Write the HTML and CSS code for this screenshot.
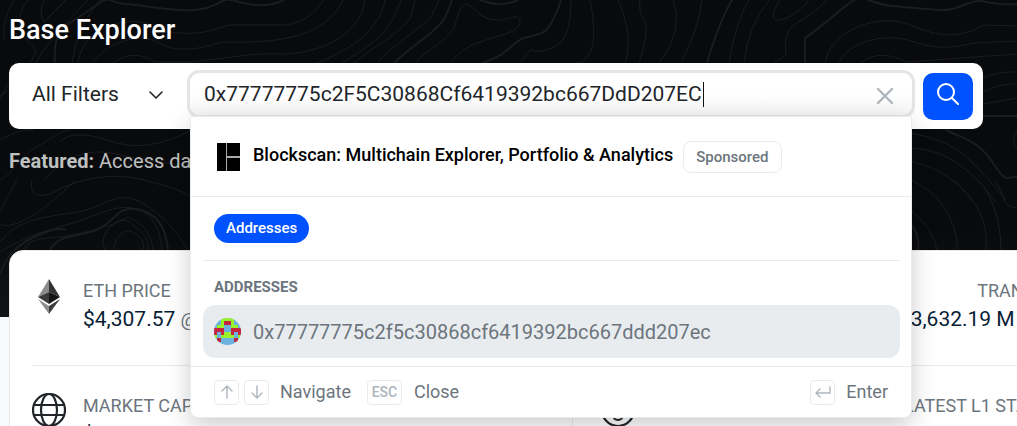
FILE: index.html
```html
<!DOCTYPE html>
<html lang="en">
<head>
<meta charset="utf-8">
<title>Base Explorer</title>
<link rel="stylesheet" href="styles.css">
</head>
<body>
<header class="hero">
  <svg class="contours" viewBox="0 0 1017 317" preserveAspectRatio="xMinYMin slice" aria-hidden="true">
    <g class="thin">
      <path d="M28 0Q18 12 20 25T36 50Q34 62 20 72T0 100"/>
      <path d="M44 0Q38 14 44 22Q54 12 66 0M14 0Q2 18 4 40"/>
      <path d="M88 0Q62 26 42 52Q30 78 0 96M100 0Q76 28 72 64"/>
      <path d="M0 140Q20 128 34 130M60 142Q72 128 110 141T191 130"/>
      <path d="M78 64C80 40 100 26 125 22S160 34 180 33C210 35 218 26 232 25H278C300 26 318 12 323 0"/>
      <path d="M92 64C104 46 122 40 138 38S165 50 180 49C205 50 215 42 226 42C270 43 325 40 343 0"/>
      <path d="M112 64C124 54 140 52 155 62L191 62C230 58 250 53 280 54S360 40 365 0"/>
      <path d="M317 63C350 50 380 30 385 0M342 63C370 45 390 35 401 0M354 63C380 42 405 30 411 16L415 0M377 63C392 45 425 26 432 15L439 0M417 63C415 56 450 42 455 25S464 -2 473 8S490 20 499 20S520 12 520 22S500 35 480 42S460 54 450 63"/>
      <path d="M571 0Q571 38 556 46T531 50Q524 56 520 63M590 0Q602 60 576 63M618 0Q634 38 625 63M640 0Q638 10 644 20T639 63M673 0Q684 30 659 63M702 0Q698 30 681 63M749 0Q736 20 729 63M769 0Q748 26 744 63M780 0Q766 22 780 20T809 0M826 0Q814 14 798 22T786 55L774 63"/>
      <path d="M825 63C830 30 880 12 910 25S960 38 984 25L1017 26M839 63C846 47 870 36 895 38S928 54 974 43L1017 41M860 63Q880 48 906 62L1017 54"/>
      <path d="M983 78Q1000 71 1017 72M983 92Q1000 83 1017 84M983 104L1017 98"/>
      <path d="M1017 130Q1010 141 1017 149M911 133Q950 140 970 160T1006 200M911 148Q960 150 996 203M911 161Q950 170 972 200"/>
      <path d="M911 180Q954 200 958 250M953 180Q990 210 986 250M978 180Q1000 204 1001 250M995 180L1002 194Q1006 210 1017 207M911 211Q933 227 937 250"/>
      <path d="M0 180C14 174 16 158 38 146S55 134 68 130"/>
      <path d="M32 180Q28 200 50 194Q98 168 144 180T191 198"/>
      <path d="M76 180C54 200 32 221 10 225S2 207 17 180"/>
      <path d="M44 180Q74 144 117 154T191 165"/>
      <path d="M0 242C16 220 44 217 72 213S110 196 128 198S174 224 187 250"/>
      <path d="M0 252C34 231 60 228 82 220S118 204 136 209S160 230 162 250"/>
      <path d="M24 250Q28 239 48 238T94 230T128 217Q152 227 153 250M105 250Q99 238 111 226T133 225Q150 236 148 250M115 250Q112 244 120 235T138 236Q147 244 142 250"/>
    </g>
    <g class="thick">
      <path d="M55 64Q53 40 62 28C75 20 84 14 98 4S110 4 125 4S170 12 195 10S220 -3 232 0S262 10 284 0"/>
      <path d="M394 63C410 46 442 30 447 13L452 0M480 0Q500 8 518 0"/>
      <path d="M482 63C510 54 512 42 524 38S544 36 550 25S558 12 561 0"/>
      <path d="M732 0Q719 22 707 63M805 63V38C820 28 832 17 848 4S868 4 892 6S932 10 945 10S970 0 980 1S1000 6 1017 4"/>
      <path d="M946 130C960 137 978 140 993 163S1006 176 1017 177M983 116H1017"/>
      <path d="M50 250C58 234 76 238 96 230S116 206 136 209S166 226 168 250M911 224Q920 235 918 250"/>
      <path d="M0 274Q8 250 32 238T66 230"/>
    </g>
  </svg>
  <div class="hero-body">
    <h1 class="title">Base Explorer</h1>
    <form class="search">
      <label class="filters">
        <select class="filter-select" aria-label="Filter"><option>All Filters</option></select>
        <svg class="chevron" viewBox="0 0 14 14" aria-hidden="true"><path d="M1 5l6 6 6-6"/></svg>
      </label>
      <div class="field">
        <input class="query" type="text" aria-label="Search" value="0x77777775c2F5C30868Cf6419392bc667DdD207EC">
        <span class="caret"></span>
        <button class="clear" type="button" aria-label="Clear"><svg viewBox="0 0 18 18"><path d="M2 2l14 14M16 2L2 16"/></svg></button>
        <section class="results">
          <a class="sponsor" href="#blockscan">
            <svg class="blockscan" viewBox="0 0 23 28" aria-hidden="true"><path fill="#aaa" d="M9 0h1v28H9zM10 13h13v2H10z"/><path d="M0 0h9v28H0zM10 0h13v13H10zM10 15h13v13H10z"/></svg>
            <span class="sponsor-name">Blockscan: Multichain Explorer, Portfolio &amp; Analytics</span>
            <span class="badge">Sponsored</span>
          </a>
          <div class="tabs"><button class="pill" type="button">Addresses</button></div>
          <div class="group">
            <h2 class="group-title">ADDRESSES</h2>
            <a class="result" href="#address">
              <svg class="avatar" viewBox="0 0 8 8" shape-rendering="crispEdges" aria-hidden="true">
                <path fill="#6bb2df" d="M0 0h8v8H0z"/>
                <path fill="#97f22b" d="M2 0h4v2H2zM1 2h2v1H1zM5 2h2v1H5zM3 4h2v1h1v1H2V5h1zM0 5h1v1H0zM7 5h1v1H7z"/>
                <path fill="#c42440" d="M3 1h2v1H3zM0 3h3v1H1v1H0zM5 3h3v2H7V4H5zM1 6h1v1H1zM6 6h1v1H6zM2 4h1v1H2zM5 4h1v1H5z"/>
              </svg>
              <span>0x77777775c2f5c30868cf6419392bc667ddd207ec</span>
            </a>
          </div>
          <footer class="hints">
            <kbd class="key"><svg viewBox="0 0 16 16"><path d="M8 14V2M3 7l5-5 5 5"/></svg></kbd>
            <kbd class="key"><svg viewBox="0 0 16 16"><path d="M8 2v12M3 9l5 5 5-5"/></svg></kbd>
            <span class="hint">Navigate</span>
            <kbd class="key esc">ESC</kbd>
            <span class="hint">Close</span>
            <kbd class="key enter"><svg viewBox="0 0 16 16"><path d="M15 3v6H1M5 5L1 9l4 4"/></svg></kbd>
            <span class="hint last">Enter</span>
          </footer>
        </section>
      </div>
      <button class="submit" type="submit" aria-label="Search"><svg viewBox="0 0 22 22"><circle cx="9" cy="9" r="8"/><path d="M15 15l6 6"/></svg></button>
    </form>
    <p class="featured"><strong>Featured:</strong> Access data</p>
  </div>
</header>
<main class="stats">
  <div class="column">
    <div class="stat">
      <svg class="icon" viewBox="0 -1 34 36" aria-hidden="true">
        <path fill="#8c8c8c" d="M17 0v13L6 18z"/><path fill="#343434" d="M17 0v13l11 5z"/>
        <path fill="#3c3c3b" d="M17 13v12L6 18z"/><path fill="#141414" d="M17 13v12l11-7z"/>
        <path fill="#8c8c8c" d="M6 20l11 7v8z"/><path fill="#3c3c3b" d="M28 20l-11 7v8z"/>
      </svg>
      <div><div class="label">ETH PRICE</div><div class="value">$4,307.57 <span class="muted">@</span></div></div>
    </div>
    <div class="stat">
      <svg class="icon line" viewBox="0 0 34 34" aria-hidden="true"><circle cx="17" cy="17" r="16"/><ellipse cx="17" cy="17" rx="8" ry="16"/><path d="M2 12h30M2 22h30"/></svg>
      <div><div class="label">MARKET CAP</div><div class="value">$</div></div>
    </div>
  </div>
  <div class="column">
    <div class="stat end">
      <div><div class="label">TRANSACTIONS</div><div class="value">3,632.19 M <span class="muted">(94.5 TPS)</span></div></div>
    </div>
    <div class="stat end">
      <svg class="icon line" viewBox="0 0 34 34" aria-hidden="true"><circle cx="17" cy="17" r="16"/><circle cx="17" cy="22" r="5"/></svg>
      <div><div class="label">LATEST L1 STATE BATCH</div></div>
    </div>
  </div>
</main>
</body>
</html>
```
FILE: styles.css
```css
* { box-sizing: border-box; }
body { margin: 0; overflow: hidden; background: #f8f9fb; color: #081d35; font-family: Roboto, sans-serif; font-size: 20px; line-height: 28px; }
button, input, select { font: inherit; margin: 0; }
a { color: inherit; text-decoration: none; }
svg { display: block; }

/* Hero */
.hero { position: relative; height: 317px; margin-bottom: -67px; background: linear-gradient(#090a0c 230px, #131417); }
.contours { position: absolute; inset: 0; width: 100%; height: 100%; fill: none; stroke: #1b1c1f; }
.thin { stroke-width: 1; }
.thick { stroke-width: 2; }
.hero-body { position: relative; z-index: 2; padding: 14px 34px 0 9px; }
.title { margin: 0 0 17px; color: #fff; font-size: 27px; line-height: 32px; font-weight: 500; }
.featured { margin: 18px 0 0; color: #bfc0c0; }

/* Search bar */
.search { display: flex; align-items: flex-start; gap: 8px; margin: 0; padding: 7px 10px 9px 0; background: #fff; border-radius: 10px; }
.filters { flex: none; display: flex; align-items: center; gap: 30px; width: 170px; height: 48px; padding-left: 23px; }
.filter-select { appearance: none; border: 0; padding: 0; background: none; color: #212529; font-size: 21px; outline: none; }
.chevron { width: 14px; height: 14px; fill: none; stroke: #212529; stroke-width: 1.6; stroke-linecap: round; stroke-linejoin: round; }
.field { position: relative; flex: 1; display: flex; align-items: center; height: 48px; padding: 0 18px 0 14px; border: 3px solid #e4e5e6; border-radius: 12px; background: linear-gradient(#fff 50%, #f5f5f5); }
.query { flex: 1; min-width: 0; border: 0; padding: 0; background: none; color: #212529; font-size: 21px; outline: none; }
.caret { position: absolute; left: 513px; top: 9px; width: 1px; height: 25px; background: #111; }
.clear { border: 0; padding: 4px 0 0; background: none; }
.clear svg { width: 18px; height: 18px; fill: none; stroke: #adb5bd; stroke-width: 2.4; stroke-linecap: round; }
.submit { flex: none; display: flex; justify-content: center; width: 50px; height: 47px; margin-top: 3px; padding: 10px 0 15px; border: 0; border-radius: 10px; background: #0052ff; }
.submit svg { width: 22px; height: 22px; fill: none; stroke: #fff; stroke-width: 2; stroke-linecap: round; }

/* Results menu */
.results { position: absolute; left: 0; right: 0; top: 43px; border: 1px solid #e9ecef; border-radius: 0 0 8px 8px; background: #fff; color: #6c757d; box-shadow: 0 8px 24px rgba(0, 0, 0, 0.2); }
.sponsor { display: flex; align-items: center; height: 80px; padding-left: 26px; border-bottom: 1px solid #e9ecef; }
.blockscan { width: 23px; height: 28px; fill: #000; }
.sponsor-name { margin: 0 10px 0 13px; padding-bottom: 4px; color: #000; font-size: 18px; font-weight: 500; }
.badge { padding: 0 12px; border: 1px solid #e9ecef; border-radius: 8px; font-size: 15px; line-height: 30px; font-weight: 500; }
.tabs { display: flex; margin: 0 11px 0 12px; padding: 17px 11px; border-bottom: 1px solid #e9ecef; }
.pill { border: 0; padding: 0 12px; border-radius: 15px; background: #0052ff; color: #fff; font-size: 15px; line-height: 29px; font-weight: 500; }
.group { padding: 16px 11px 8px 12px; }
.group-title { margin: 0 0 8px 11px; font-size: 15px; line-height: 20px; font-weight: 700; }
.result { display: flex; align-items: center; gap: 12px; height: 53px; padding-left: 11px; border-radius: 12px; background: #e9ecef; }
.avatar { width: 27px; height: 27px; border-radius: 50%; }
.hints { display: flex; align-items: center; height: 51px; padding: 0 23px; border-top: 1px solid #e9ecef; font-size: 18px; }
.key { display: grid; place-items: center; width: 25px; height: 25px; margin-right: 5px; border: 1px solid #e9ecef; border-radius: 4px; font: inherit; color: #adb5bd; }
.key svg { width: 16px; height: 16px; fill: none; stroke: #adb5bd; stroke-width: 1.4; stroke-linecap: round; stroke-linejoin: round; }
.esc { width: 35px; margin-right: 12px; font-size: 14px; line-height: 23px; font-weight: 500; }
.hint { margin: 0 16px 0 6px; }
.esc + .hint { margin-left: 0; }
.enter { margin-left: auto; }
.last { margin-right: 0; }

/* Network stats */
.stats { position: relative; z-index: 1; display: grid; grid-template-columns: 562px 1fr; width: calc(100% + 106px); margin-left: 9px; border: 1px solid #e9ecef; border-radius: 14px; background: #fff; }
.column { padding: 0 22px; }
.column + .column { padding-left: 28px; border-left: 1px solid #e9ecef; }
.stat { display: flex; gap: 17px; height: 114px; padding-top: 25px; }
.stat + .stat { border-top: 1px solid #e9ecef; }
.end { justify-content: space-between; text-align: right; }
.end > :only-child { margin-left: auto; }
.label { color: #6c757d; font-size: 18px; line-height: 29px; }
.value { font-size: 21px; }
.muted { color: #6c757d; font-size: 19px; }
.icon { width: 34px; height: 36px; margin-top: 2px; }
.line { height: 34px; fill: none; stroke: #212529; stroke-width: 2.2; }
```
